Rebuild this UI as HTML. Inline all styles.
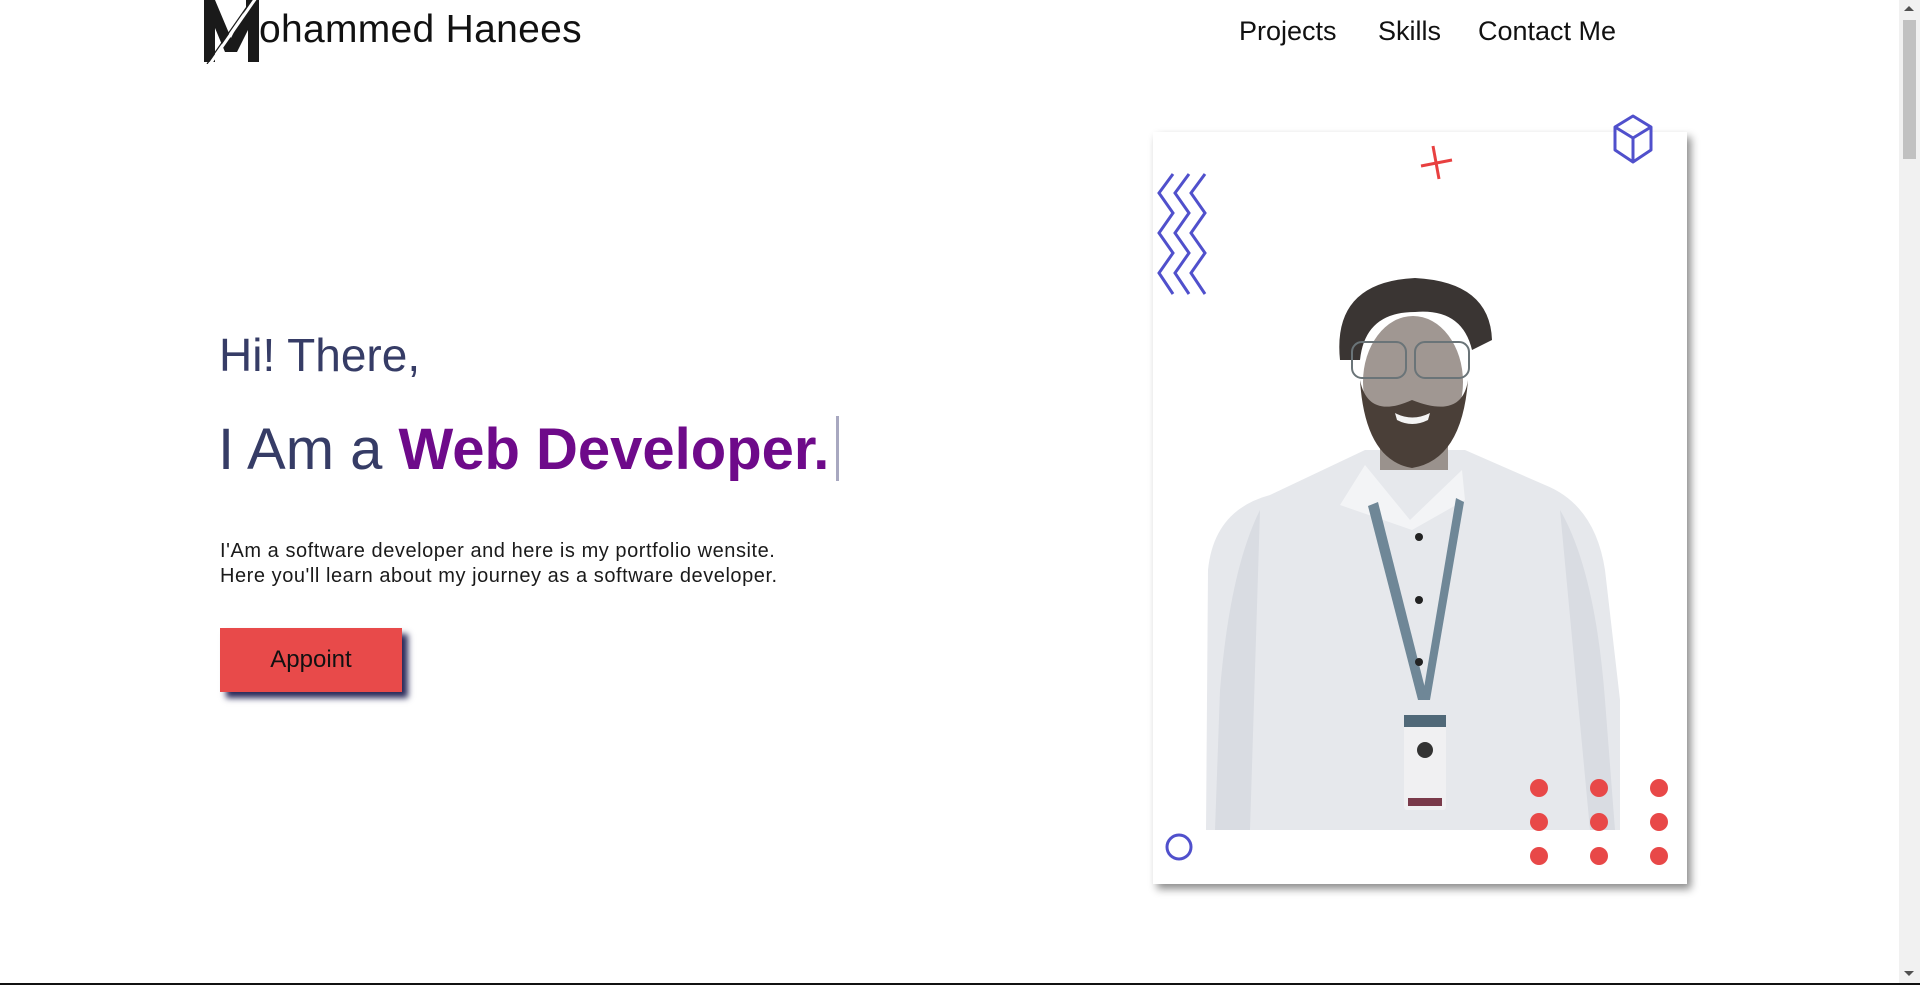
<!DOCTYPE html>
<html><head><meta charset="utf-8"><style>
*{margin:0;padding:0;box-sizing:border-box}
html,body{width:1920px;height:985px;overflow:hidden;background:#fff;font-family:"Liberation Sans",sans-serif}
.abs{position:absolute}
.nav{position:absolute;top:16px;font-size:27px;color:#111;white-space:nowrap}
</style></head><body>
<svg class="abs" style="left:204px;top:0" width="60" height="64" viewBox="0 0 60 64">
<path d="M0 0 L11 0 L27 38 L42 8 L42 0 L55 0 L55 62 L44 62 L44 30 L33 52 L21 52 L11 28 L11 62 L0 62 Z" fill="#1a1a1a"/>
<line x1="52" y1="-2" x2="6" y2="64" stroke="#fff" stroke-width="3"/>
<line x1="49" y1="-2" x2="3" y2="64" stroke="#1a1a1a" stroke-width="1.2"/>
</svg>
<div class="abs" style="left:259px;top:8px;font-size:39px;letter-spacing:0.3px;color:#111;white-space:nowrap">ohammed Hanees</div>
<div class="nav" style="left:1239px">Projects</div>
<div class="nav" style="left:1378px">Skills</div>
<div class="nav" style="left:1478px">Contact Me</div>

<div class="abs" style="left:219px;top:328px;font-size:46px;color:#363c66;white-space:nowrap">Hi! There,</div>
<div class="abs" style="left:218px;top:416px;font-size:58px;color:#363c66;white-space:nowrap">I Am a <span style="color:#6e0a8a;font-weight:bold">Web Developer.</span></div>
<div class="abs" style="left:836px;top:416px;width:3px;height:65px;background:#a8a8c0"></div>
<div class="abs" style="left:220px;top:539px;font-size:20px;letter-spacing:0.55px;line-height:24.5px;color:#1a1a1a;white-space:nowrap">I'Am a software developer and here is my portfolio wensite.<br>Here you'll learn about my journey as a software developer.</div>
<div class="abs" style="left:220px;top:628px;width:182px;height:64px;background:#e84a4a;box-shadow:6px 6px 6px #2a2a5a;font-size:24px;color:#111;text-align:center;line-height:64px">Appoint</div>

<div class="abs" style="left:1153px;top:132px;width:534px;height:752px;background:#fff;box-shadow:4px 5px 8px rgba(0,0,0,.45)"></div>
<svg class="abs" style="left:1200px;top:270px" width="440" height="560" viewBox="0 0 440 560">
<path d="M6 560 L8 300 Q14 240 70 225 L165 180 L265 180 L345 215 Q395 235 405 300 L420 430 L420 560 Z" fill="#e6e8ec"/>
<path d="M60 240 Q30 300 20 420 L15 560 L50 560 L55 400 Z" fill="#d9dce2"/>
<path d="M360 240 Q395 300 405 430 L415 560 L390 560 L375 400 Z" fill="#d9dce2"/>
<path d="M165 195 L210 250 L262 200 L265 230 L212 260 L140 235 Z" fill="#f3f4f6"/>
<path d="M168 236 L218 430 L228 430 L178 232 Z" fill="#6f8797"/>
<path d="M256 228 L222 430 L230 430 L264 232 Z" fill="#6f8797"/>
<rect x="204" y="445" width="42" height="95" rx="3" fill="#f0f0f2"/>
<rect x="204" y="445" width="42" height="12" fill="#506878"/>
<circle cx="225" cy="480" r="8" fill="#333"/>
<rect x="208" y="528" width="34" height="8" fill="#7a3a4a"/>
<circle cx="219" cy="267" r="4" fill="#222"/><circle cx="219" cy="330" r="4" fill="#222"/><circle cx="219" cy="392" r="4" fill="#222"/>
<rect x="180" y="160" width="68" height="40" fill="#9a928d"/>
<ellipse cx="213" cy="112" rx="50" ry="66" fill="#a09792"/>
<path d="M160 110 Q165 190 212 198 Q262 190 268 110 Q262 150 212 130 Q168 150 160 110 Z" fill="#4a3f38"/>
<path d="M195 143 Q212 152 230 143 L228 150 Q212 158 197 150 Z" fill="#f4f4f4"/>
<path d="M140 90 Q132 12 215 8 Q290 12 292 70 L272 80 Q262 38 215 42 Q165 42 160 90 Z" fill="#3a3533"/>
<rect x="152" y="72" width="54" height="36" rx="10" fill="none" stroke="#6a7478" stroke-width="2"/>
<rect x="215" y="72" width="54" height="36" rx="10" fill="none" stroke="#6a7478" stroke-width="2"/>
</svg>
<svg class="abs" style="left:1155px;top:170px" width="60" height="132" viewBox="0 0 60 132">
<g fill="none" stroke="#5050cc" stroke-width="3">
<path d="M18 4 L4 23 L18 43 L4 63 L18 83 L4 103 L18 124"/>
<path d="M34 4 L20 23 L34 43 L20 63 L34 83 L20 103 L34 124"/>
<path d="M50 4 L36 23 L50 43 L36 63 L50 83 L36 103 L50 124"/>
</g></svg>
<svg class="abs" style="left:1400px;top:140px" width="60" height="50" viewBox="0 0 60 50">
<g stroke="#e84040" stroke-width="3"><line x1="21" y1="26" x2="52" y2="20"/><line x1="33" y1="6" x2="39" y2="39"/></g></svg>
<svg class="abs" style="left:1610px;top:112px" width="46" height="56" viewBox="0 0 46 56">
<g fill="none" stroke="#5050cc" stroke-width="3" stroke-linejoin="round">
<path d="M23 4 L41 15 L41 38 L23 50 L5 38 L5 15 Z"/><path d="M5 15 L23 26 L41 15 M23 26 L23 50"/></g></svg>
<svg class="abs" style="left:1160px;top:830px" width="40" height="36"><circle cx="19" cy="17" r="12" fill="none" stroke="#5050cc" stroke-width="3"/></svg>
<svg class="abs" style="left:1520px;top:770px" width="160" height="100">
<g fill="#e84848">
<circle cx="19" cy="18" r="9"/><circle cx="79" cy="18" r="9"/><circle cx="139" cy="18" r="9"/>
<circle cx="19" cy="52" r="9"/><circle cx="79" cy="52" r="9"/><circle cx="139" cy="52" r="9"/>
<circle cx="19" cy="86" r="9"/><circle cx="79" cy="86" r="9"/><circle cx="139" cy="86" r="9"/>
</g></svg>

<div class="abs" style="left:1899px;top:0;width:21px;height:985px;background:#f1f1f1"></div>
<div class="abs" style="left:1903px;top:20px;width:13px;height:139px;background:#c1c1c1"></div>
<div class="abs" style="left:1904px;top:6px;width:0;height:0;border-left:5px solid transparent;border-right:5px solid transparent;border-bottom:5px solid #505050"></div>
<div class="abs" style="left:1904px;top:971px;width:0;height:0;border-left:5px solid transparent;border-right:5px solid transparent;border-top:5px solid #505050"></div>
<div class="abs" style="left:0;top:983px;width:1920px;height:2px;background:#111"></div>
</body></html>
